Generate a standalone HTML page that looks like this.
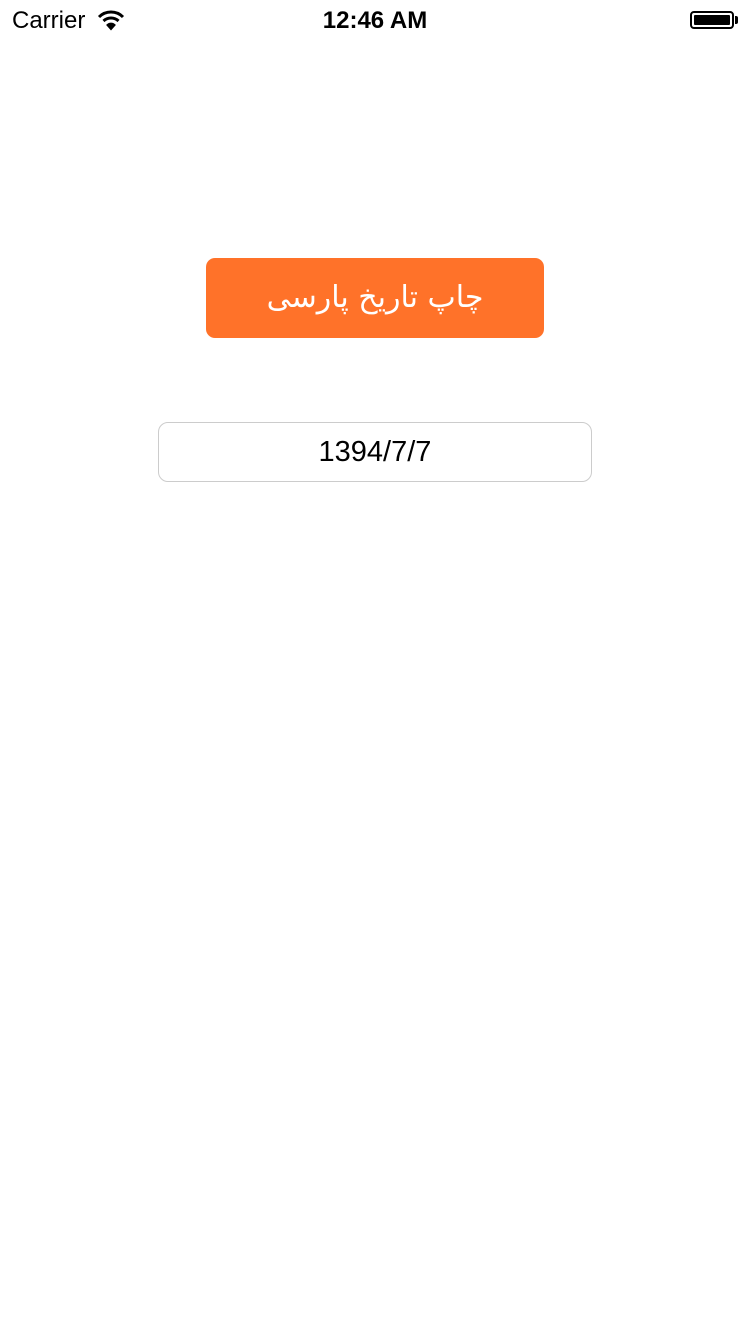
<!DOCTYPE html>
<html><head><meta charset="utf-8"><style>
html,body{margin:0;padding:0;width:750px;height:1334px;background:#fff;overflow:hidden;font-family:"Liberation Sans",sans-serif;position:relative}
.sb{position:absolute;top:0;left:0;width:750px;height:40px}
.carrier{position:absolute;left:12px;top:7px;font-size:24px;color:#000}
.time{position:absolute;left:0;width:750px;text-align:center;top:7px;font-size:24px;font-weight:bold;color:#000}
.bat{position:absolute;left:690px;top:11px;width:44px;height:18px;border:2px solid #000;border-radius:4px;box-sizing:border-box;padding:2px}
.bat i{display:block;width:100%;height:100%;background:#000;border-radius:1px}
.nub{position:absolute;left:735px;top:16px;width:3px;height:8px;background:#000;border-radius:0 2px 2px 0}
.btn{position:absolute;left:206px;top:258px;width:338px;height:80px;background:#FF7229;border-radius:9px;color:#fff;font-family:"DejaVu Sans",sans-serif;font-size:30px;text-align:center;line-height:80px;direction:rtl}
.fld{position:absolute;left:158px;top:422px;width:434px;height:60px;border:1px solid #ccc;border-radius:10px;box-sizing:border-box;text-align:center;line-height:58px;font-size:29px;color:#000}
</style></head><body>
<div class="sb">
<div class="carrier">Carrier</div>
<svg style="position:absolute;left:97px;top:9px" width="28" height="22" viewBox="0 0 28 22">
<path d="M2 8 A17 17 0 0 1 26 8" stroke="#000" stroke-width="3" fill="none"/>
<path d="M6.5 12 A11 11 0 0 1 21.5 12" stroke="#000" stroke-width="3" fill="none"/>
<path d="M10.5 16 A5 5 0 0 1 17.5 16 L14 20 Z" fill="#000" stroke="#000" stroke-width="2"/>
</svg>
<div class="time">12:46 AM</div>
<div class="bat"><i></i></div><div class="nub"></div>
</div>
<div class="btn">چاپ تاریخ پارسی</div>
<div class="fld">1394/7/7</div>
</body></html>
